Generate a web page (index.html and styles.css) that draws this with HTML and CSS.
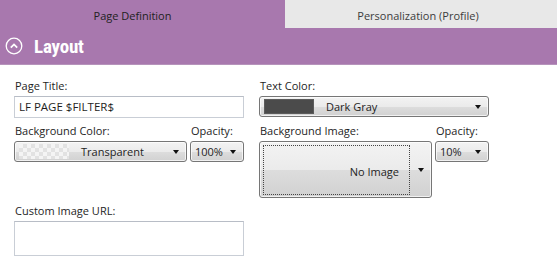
FILE: index.html
```html
<!DOCTYPE html>
<html>
<head>
	<title>Page Settings</title>
	<link rel="stylesheet" href="styles.css">
</head>
<body>
	<div class="tabs">
		<div class="tab active">Page Definition</div>
		<div class="tab">Personalization (Profile)</div>
	</div>

	<div class="section-header">
		<svg class="collapse-icon" width="18" height="18" viewBox="0 0 18 18">
			<circle cx="9" cy="9" r="7.8" fill="none" stroke="#fff" stroke-width="1.3"/>
			<path d="M5.8 10.6 L9 7.4 L12.2 10.6" fill="none" stroke="#fff" stroke-width="1.8"/>
		</svg>
		<span class="section-title">Layout</span>
	</div>

	<div class="form">
		<div class="field">
			<label>Page Title:</label>
			<div class="textbox">LF PAGE $FILTER$</div>
		</div>
		<div class="field">
			<label>Text Color:</label>
			<div class="combo">
				<span class="swatch dark"></span>
				<span class="combo-text">Dark Gray</span>
				<span class="arrow"></span>
			</div>
		</div>

		<div class="field-row">
			<div class="field grow">
				<label>Background Color:</label>
				<div class="combo">
					<span class="swatch checker"></span>
					<span class="combo-text">Transparent</span>
					<span class="arrow"></span>
				</div>
			</div>
			<div class="field small">
				<label>Opacity:</label>
				<div class="combo">
					<span class="combo-text plain">100%</span>
					<span class="arrow"></span>
				</div>
			</div>
		</div>
		<div class="field-row">
			<div class="field grow">
				<label>Background Image:</label>
				<div class="image-button">
					<div class="focus-box">No Image</div>
					<span class="arrow"></span>
				</div>
			</div>
			<div class="field small">
				<label>Opacity:</label>
				<div class="combo">
					<span class="combo-text plain">10%</span>
					<span class="arrow"></span>
				</div>
			</div>
		</div>

		<div class="field">
			<label>Custom Image URL:</label>
			<div class="textbox tall"></div>
		</div>
	</div>
</body>
</html>
```

FILE: styles.css
```css
body {
	margin: 0;
	background-color: #fff;
	font-family: 'Open Sans', 'Noto Sans', sans-serif;
	font-size: 11px;
	color: #1e1e1e;
	overflow: hidden;
}

.tabs {
	display: flex;
	height: 28px;
	background-color: #a878ae;
}

.tab {
	flex: 1;
	display: flex;
	align-items: center;
	justify-content: center;
	background-color: #e8e8e8;
	color: #3c3c3c;
	padding: 2px 6px 0 0;
}

.tab.active {
	flex: 0 0 265px;
	padding-right: 20px;
	background-color: #a878ae;
	color: #222;
}

.section-header {
	display: flex;
	align-items: center;
	height: 36px;
	padding-left: 5px;
	background-color: #a878ae;
	border-bottom: 1px solid #b693bb;
}

.collapse-icon {
	margin-right: 11px;
}

.section-title {
	font-family: 'Liberation Sans Narrow', 'Roboto', sans-serif;
	font-stretch: condensed;
	font-size: 19px;
	font-weight: bold;
	color: #fff;
	letter-spacing: -0.2px;
}

.form {
	display: grid;
	grid-template-columns: 230px 230px;
	column-gap: 15px;
	row-gap: 5px;
	padding: 13px 0 0 14px;
	align-items: start;
}

.field {
	display: flex;
	flex-direction: column;
}

.field label {
	height: 16px;
	line-height: 16px;
	margin-bottom: 2px;
	padding-left: 1px;
}

.field-row {
	display: flex;
	gap: 3px;
}

.field.grow {
	flex: 1;
}

.field.small {
	flex: 0 0 54px;
}

.textbox {
	height: 20px;
	line-height: 20px;
	padding-left: 4px;
	border: 1px solid #c9ced6;
	border-top-color: #b8bdc6;
	font-size: 11.5px;
	color: #1e1e1e;
}

.textbox.tall {
	height: 33px;
}

.combo {
	display: flex;
	align-items: center;
	height: 19px;
	padding: 0 4px;
	border: 1px solid #767676;
	border-radius: 3px;
	background: linear-gradient(#f3f3f3 0%, #ebebeb 50%, #dddddd 51%, #d1d1d1 100%);
	box-shadow: inset 0 0 0 1px rgba(255, 255, 255, 0.7);
}

.swatch {
	width: 50px;
	height: 15px;
	flex: none;
}

.swatch.dark {
	background-color: #4b4b4b;
	border: 1px solid #5c5c5c;
	width: 48px;
	height: 13px;
}

.swatch.checker {
	background-color: #f4f4f4;
	background-image:
		linear-gradient(45deg, #e2e2e2 25%, transparent 25%, transparent 75%, #e2e2e2 75%),
		linear-gradient(45deg, #e2e2e2 25%, transparent 25%, transparent 75%, #e2e2e2 75%);
	background-size: 8px 8px;
	background-position: 0 0, 4px 4px;
}

.combo-text {
	flex: 1;
	padding-left: 12px;
	color: #1e1e1e;
}

.combo-text.plain {
	padding-left: 0;
}

.arrow {
	width: 0;
	height: 0;
	border-left: 3.5px solid transparent;
	border-right: 3.5px solid transparent;
	border-top: 4px solid #111;
	margin-right: 3px;
}

.image-button {
	display: flex;
	align-items: center;
	height: 55px;
	padding: 0 4px 0 3px;
	border: 1px solid #767676;
	border-radius: 3px;
	background: linear-gradient(#f3f3f3 0%, #ebebeb 50%, #dddddd 51%, #d1d1d1 100%);
	box-shadow: inset 0 0 0 1px rgba(255, 255, 255, 0.7);
}

.focus-box {
	flex: 1;
	box-sizing: border-box;
	height: 50px;
	line-height: 48px;
	padding: 2px 10px 0 0;
	margin-right: 8px;
	text-align: right;
	border: 1px dotted #444;
	color: #1e1e1e;
}
```
